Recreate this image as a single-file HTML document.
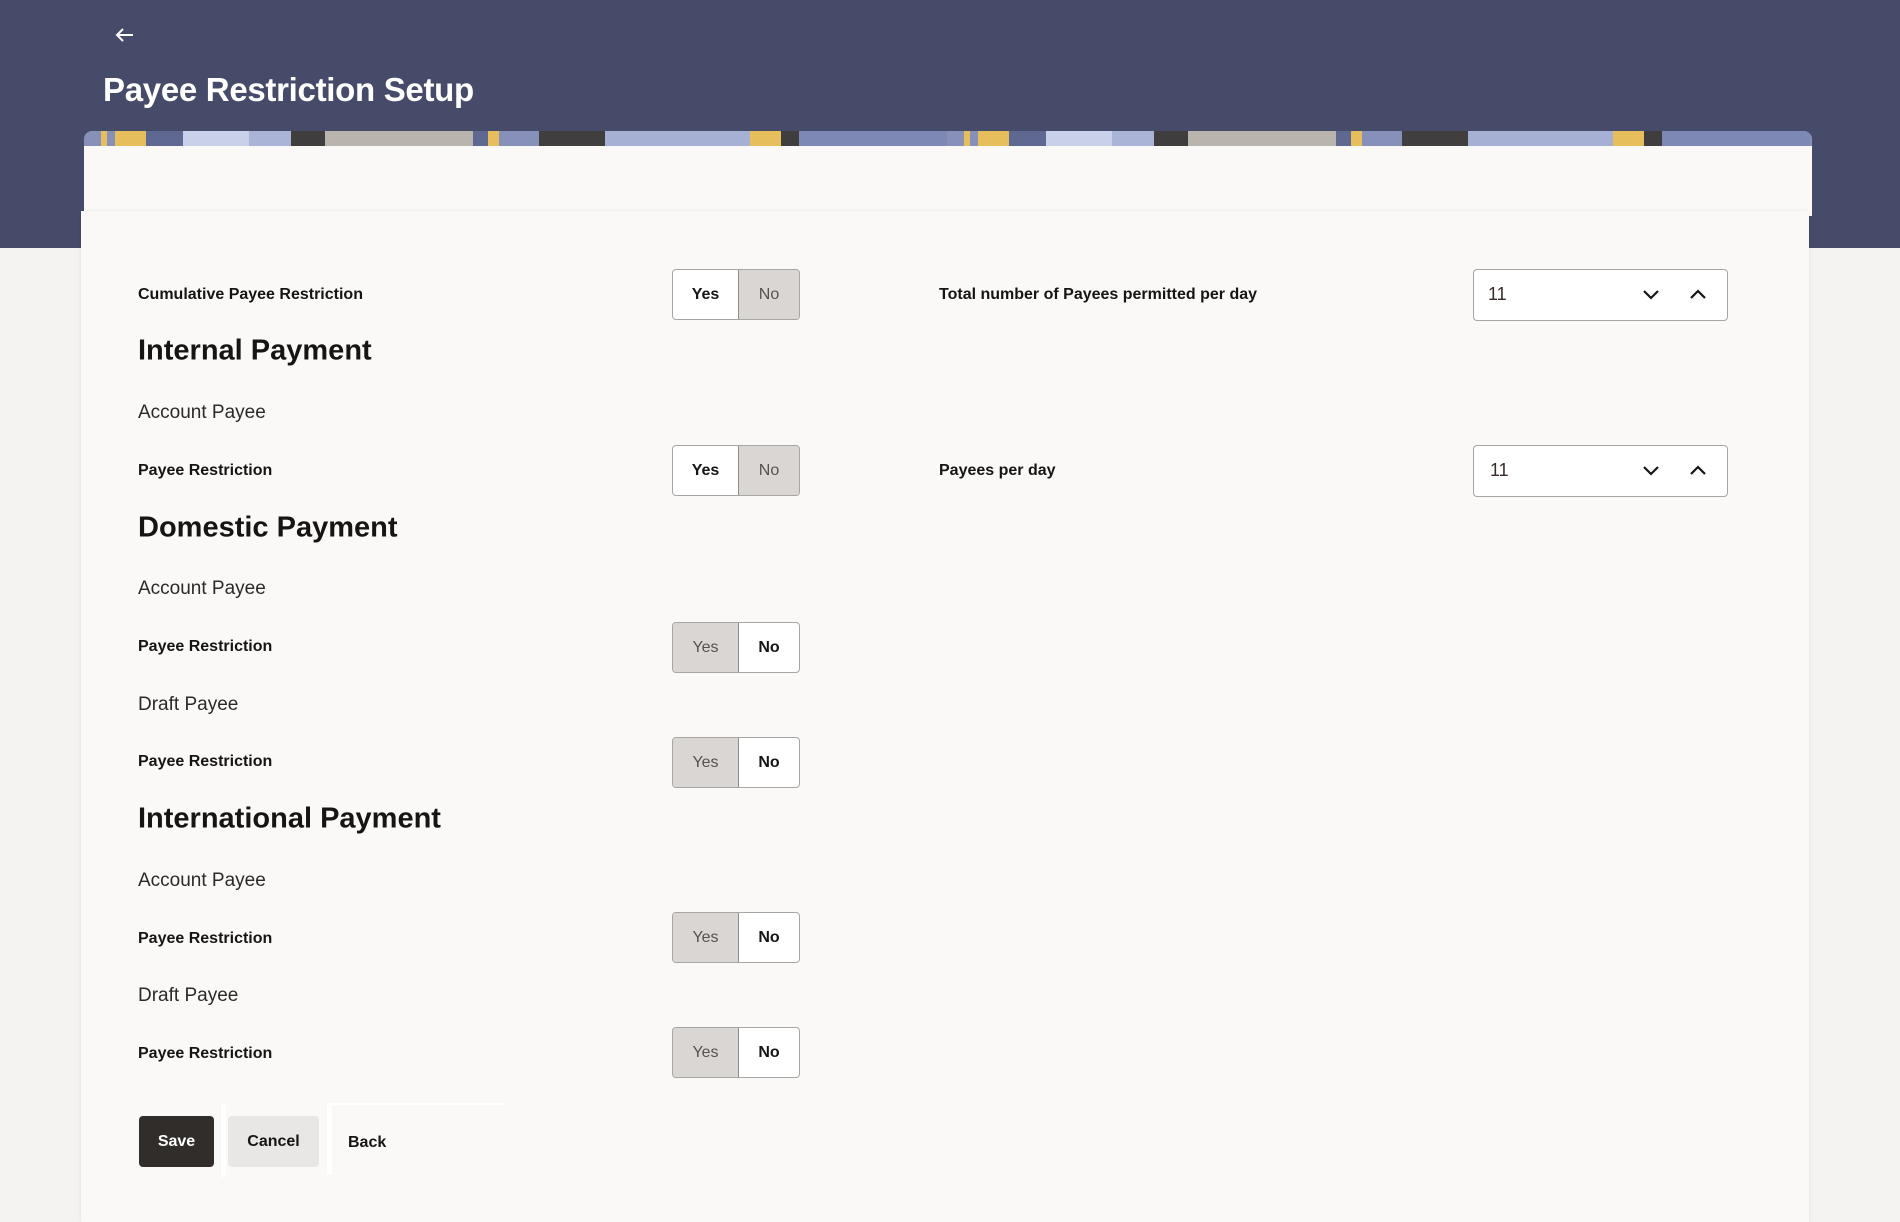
<!DOCTYPE html>
<html><head><meta charset="utf-8">
<style>
*{box-sizing:border-box;margin:0;padding:0}
body{width:1900px;height:1222px;overflow:hidden;background:#f4f3f1;font-family:"Liberation Sans",sans-serif;color:#161513;position:relative}
.hdr{position:absolute;left:0;top:0;width:1900px;height:248px;background:#474b6a}
.back{position:absolute;left:112px;top:22px;width:26px;height:26px}
.title{position:absolute;left:103px;top:71px;font-size:33px;font-weight:bold;color:#fff;letter-spacing:-0.3px}
.banner{position:absolute;left:84px;top:131px;width:1728px;height:16px;border-radius:8px 8px 0 0;
background:repeating-linear-gradient(90deg,#8790b8 0,#8790b8 17px,#e6bf5c 17px,#e6bf5c 23px,#8790b8 23px,#8790b8 31px,#e6bf5c 31px,#e6bf5c 62px,#5f6890 62px,#5f6890 99px,#c8d0ea 99px,#c8d0ea 165px,#aab4d6 165px,#aab4d6 207px,#3f3d3d 207px,#3f3d3d 241px,#b9b4ae 241px,#b9b4ae 389px,#5f6890 389px,#5f6890 404px,#e6bf5c 404px,#e6bf5c 415px,#8790b8 415px,#8790b8 455px,#403e3e 455px,#403e3e 521px,#a6b0d4 521px,#a6b0d4 666px,#e6bf5c 666px,#e6bf5c 697px,#3f3d3d 697px,#3f3d3d 715px,#7d88b4 715px,#7d88b4 863px)}
.card1{position:absolute;left:84px;top:146px;width:1728px;height:70px;background:#faf9f8}
.card2{position:absolute;left:81px;top:211px;width:1728px;height:1011px;background:#faf9f8;box-shadow:0 0 4px rgba(0,0,0,.08)}
.lbl{position:absolute;left:138px;font-size:16px;font-weight:bold;transform:translateY(-50%);white-space:nowrap}
.rl{left:939px}
.h{position:absolute;left:138px;font-size:29px;font-weight:bold;transform:translateY(-50%);white-space:nowrap}
.ap{position:absolute;left:138px;font-size:19px;transform:translateY(-50%);white-space:nowrap;color:#2b2a28}
.tg{position:absolute;left:672px;width:128px;height:51px;border:1px solid #a8a6a3;border-radius:4px;display:flex;overflow:hidden;background:#fff;font-size:16px}
.tg div{display:flex;align-items:center;justify-content:center}
.tg .y{width:66px;border-right:1px solid #8f8d8a}
.tg .n{flex:1}
.tg .s{background:#d9d6d4;color:#55524f}
.tg .a{color:#161513;font-weight:bold}
.sp{position:absolute;left:1473px;width:255px;height:52px;border:1px solid #a8a6a3;border-radius:4px;background:#fff}
.sp span{position:absolute;left:14px;top:14px;font-size:18px;color:#3a2a2a}
.sp svg{position:absolute;top:18px}
.btn{position:absolute;top:1116px;height:51px;border-radius:4px;display:flex;align-items:center;justify-content:center;font-size:16px;font-weight:bold}
</style></head><body>
<div class="hdr"></div>
<svg class="back" viewBox="0 0 26 26"><path d="M21 13H5M11 7l-6 6 6 6" stroke="#fff" stroke-width="2" fill="none"/></svg>
<div class="title">Payee Restriction Setup</div>
<div class="banner"></div>
<div class="card1"></div>
<div class="card2"></div>

<div class="lbl" style="top:295px">Cumulative Payee Restriction</div>
<div class="tg" style="top:269px"><div class="y a">Yes</div><div class="n s">No</div></div>
<div class="lbl rl" style="top:295px">Total number of Payees permitted per day</div>
<div class="sp" style="top:269px"><span>11</span>
<svg style="left:168px" width="18" height="12" viewBox="0 0 18 12"><path d="M2 3l7 7 7-7" stroke="#161513" stroke-width="2.2" fill="none"/></svg>
<svg style="left:215px" width="18" height="12" viewBox="0 0 18 12"><path d="M2 10l7-7 7 7" stroke="#161513" stroke-width="2.2" fill="none"/></svg></div>

<div class="h" style="top:351px">Internal Payment</div>
<div class="ap" style="top:413px">Account Payee</div>
<div class="lbl" style="top:471px">Payee Restriction</div>
<div class="tg" style="top:445px"><div class="y a">Yes</div><div class="n s">No</div></div>
<div class="lbl rl" style="top:471px">Payees per day</div>
<div class="sp" style="top:445px"><span style="left:16px">11</span>
<svg style="left:168px" width="18" height="12" viewBox="0 0 18 12"><path d="M2 3l7 7 7-7" stroke="#161513" stroke-width="2.2" fill="none"/></svg>
<svg style="left:215px" width="18" height="12" viewBox="0 0 18 12"><path d="M2 10l7-7 7 7" stroke="#161513" stroke-width="2.2" fill="none"/></svg></div>

<div class="h" style="top:528px">Domestic Payment</div>
<div class="ap" style="top:589px">Account Payee</div>
<div class="lbl" style="top:647px">Payee Restriction</div>
<div class="tg" style="top:622px"><div class="y s">Yes</div><div class="n a">No</div></div>
<div class="ap" style="top:705px">Draft Payee</div>
<div class="lbl" style="top:762px">Payee Restriction</div>
<div class="tg" style="top:737px"><div class="y s">Yes</div><div class="n a">No</div></div>

<div class="h" style="top:819px">International Payment</div>
<div class="ap" style="top:881px">Account Payee</div>
<div class="lbl" style="top:939px">Payee Restriction</div>
<div class="tg" style="top:912px"><div class="y s">Yes</div><div class="n a">No</div></div>
<div class="ap" style="top:996px">Draft Payee</div>
<div class="lbl" style="top:1054px">Payee Restriction</div>
<div class="tg" style="top:1027px"><div class="y s">Yes</div><div class="n a">No</div></div>

<div class="btn" style="left:139px;width:75px;background:#312d2a;color:#fff">Save</div>
<div style="position:absolute;left:221px;top:1104px;width:5px;height:73px;background:#fff"></div>
<div class="btn" style="left:228px;width:91px;background:#e9e7e5;color:#161513">Cancel</div>
<div style="position:absolute;left:327px;top:1103px;width:175px;height:72px;background:#fff;border-top:1px solid #fff"></div>
<div style="position:absolute;left:327px;top:1104px;width:3px;height:71px;background:#fff"></div>
<div style="position:absolute;left:332px;top:1105px;width:170px;height:70px;background:#faf9f8"></div>
<div class="btn" style="left:348px;width:40px;background:transparent;color:#161513;justify-content:flex-start;top:1117px">Back</div>
</body></html>
